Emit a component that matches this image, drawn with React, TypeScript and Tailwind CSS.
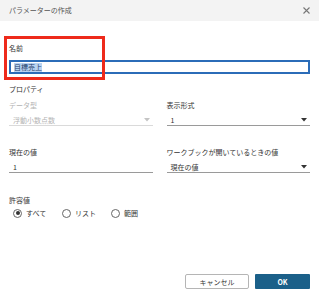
const font = { fontFamily: '"Noto Sans CJK JP", "Noto Sans", sans-serif' }

function Caret({ light }: { light?: boolean }) {
  return (
    <svg width="6" height="4" viewBox="0 0 6 4" className="shrink-0">
      <path d="M0 0 L6 0 L3 3.5 Z" fill={light ? '#c4c4c4' : '#333333'} />
    </svg>
  )
}

function Radio({ label, checked }: { label: string; checked?: boolean }) {
  return (
    <label className="flex items-center gap-[4px]">
      <span className="flex h-[9px] w-[9px] items-center justify-center rounded-full border border-[#666]">
        {checked && <span className="h-[4px] w-[4px] rounded-full bg-[#333]" />}
      </span>
      <span className="text-[7px] text-[#333]">{label}</span>
    </label>
  )
}

export default function App() {
  return (
    <div className="relative h-[295px] w-[319px] bg-white" style={font}>
      <div className="flex h-[21px] items-center justify-between bg-[#f3f3f3] pl-[9px] pr-[9px]">
        <span className="text-[7px] text-[#555]">パラメーターの作成</span>
        <svg width="7" height="7" viewBox="0 0 7 7">
          <path d="M0.5 0.5 L6.5 6.5 M6.5 0.5 L0.5 6.5" stroke="#777" strokeWidth="1.1" />
        </svg>
      </div>

      <div className="flex flex-col px-[9px] text-[7px] leading-[10px] text-[#333]">
        <div className="mt-[22px] h-[10px]">名前</div>
        <div className="mt-[7px] flex h-[14px] items-center border-2 border-[#2b6cb8] pl-[3px]">
          <span className="bg-[#b9d3f2] leading-[9px] text-[#1f3f6a]">目標売上</span>
        </div>

        <div className="mt-[10px] h-[10px]">プロパティ</div>

        <div className="mt-[6px] grid grid-cols-2 gap-x-[14px]">
          <div>
            <div className="h-[10px] text-[#b4b4b4]">データ型</div>
            <div className="mt-[4px] flex h-[12px] items-center justify-between border-b border-[#dadada] pl-[4px] pr-[3px] text-[#b4b4b4]">
              <span>浮動小数点数</span>
              <Caret light />
            </div>
          </div>
          <div>
            <div className="h-[10px]">表示形式</div>
            <div className="mt-[4px] flex h-[12px] items-center justify-between border-b border-[#9a9a9a] pl-[4px] pr-[3px]">
              <span>1</span>
              <Caret />
            </div>
          </div>

          <div className="mt-[21px]">
            <div className="h-[10px]">現在の値</div>
            <div className="mt-[4px] flex h-[12px] items-center border-b border-[#9a9a9a] pl-[4px]">
              <span>1</span>
            </div>
          </div>
          <div className="mt-[21px]">
            <div className="h-[10px]">ワークブックが開いているときの値</div>
            <div className="mt-[4px] flex h-[12px] items-center justify-between border-b border-[#9a9a9a] pl-[4px] pr-[3px]">
              <span>現在の値</span>
              <Caret />
            </div>
          </div>
        </div>

        <div className="mt-[22px] h-[10px]">許容値</div>
        <div className="mt-[3px] flex h-[10px] items-center pl-[4px]">
          <div className="w-[49px]">
            <Radio label="すべて" checked />
          </div>
          <div className="w-[49px]">
            <Radio label="リスト" />
          </div>
          <Radio label="範囲" />
        </div>

        <div className="mt-[56px] flex justify-end gap-[6px]">
          <button className="flex h-[15px] w-[64px] items-center justify-center rounded-[2px] border border-[#b5b5b5] bg-white text-[7px] text-[#333]">
            キャンセル
          </button>
          <button className="flex h-[15px] w-[55px] items-center justify-center rounded-[1px] bg-[#1b6089] text-[7px] font-bold text-white">
            OK
          </button>
        </div>
      </div>

      <div className="absolute left-[4px] top-[36px] h-[44px] w-[101px] border-[3px] border-[#ee2a1b]" />
    </div>
  )
}
